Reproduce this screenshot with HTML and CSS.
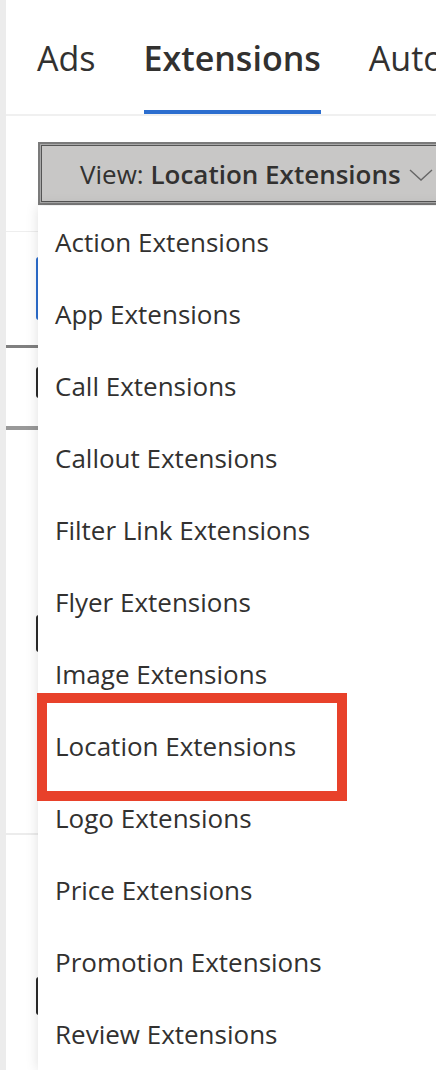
FILE: index.html
```html
<!DOCTYPE html>
<html lang="en">
<head>
<meta charset="utf-8">
<title>Extensions</title>
<link rel="stylesheet" href="styles.css">
</head>
<body>
<div class="page">
  <nav class="tabs">
    <span class="tab">Ads</span>
    <span class="tab active">Extensions</span>
    <span class="tab">Auto</span>
  </nav>
  <div class="toolbar">
    <div class="view-btn">
      <span class="view-label">View:&nbsp;<b>Location Extensions</b></span>
      <svg class="chev" width="24" height="12" viewBox="0 0 24 12"><path d="M1 1 L12 11 L23 1" fill="none" stroke="#666" stroke-width="1.4"/></svg>
    </div>
  </div>
  <div class="bg-row r1"><div class="bar blue b1"></div></div>
  <div class="bg-row r2"><div class="bar b2"></div></div>
  <div class="bg-row r3"><div class="bar b3"></div></div>
  <div class="bg-row r4"><div class="bar b4"></div></div>

  <ul class="menu">
    <li>Action Extensions</li>
    <li>App Extensions</li>
    <li>Call Extensions</li>
    <li>Callout Extensions</li>
    <li>Filter Link Extensions</li>
    <li>Flyer Extensions</li>
    <li>Image Extensions</li>
    <li class="selected">Location Extensions<span class="highlight"></span></li>
    <li>Logo Extensions</li>
    <li>Price Extensions</li>
    <li>Promotion Extensions</li>
    <li>Review Extensions</li>
  </ul>
</div>
</body>
</html>
```
FILE: styles.css
```css
html, body {
  margin: 0;
  padding: 0;
  background: #fff;
}
body {
  font-family: "Open Sans", "Noto Sans", sans-serif;
  color: #323130;
  overflow: hidden;
}
.page {
  position: relative;
  border-left: 6px solid #ececec;
  height: 1070px;
  box-sizing: border-box;
  overflow: hidden;
}
.tabs {
  display: flex;
  gap: 48px;
  padding-left: 31px;
  height: 114px;
  border-bottom: 2px solid #f0f0f0;
  white-space: nowrap;
}
.tab {
  height: 114px;
  box-sizing: border-box;
  padding-top: 6px;
  border-bottom: 4px solid transparent;
  display: flex;
  align-items: center;
  font-size: 34px;
  color: #323130;
}
.tab.active {
  font-weight: 600;
  border-bottom-color: #2c6ecf;
}
.toolbar {
  height: 116px;
  box-sizing: border-box;
  padding-top: 26px;
  padding-left: 32px;
  border-bottom: 1px solid #eeeeee;
}
.view-btn {
  display: flex;
  align-items: center;
  height: 63px;
  width: 440px;
  box-sizing: border-box;
  background: #c8c7c6;
  border: 2px solid #7b7b7b;
  box-shadow: inset 0 0 0 1px #a9a9a9, inset 0 0 0 2px #555;
  padding-left: 40px;
  font-size: 26px;
  white-space: nowrap;
}
.view-label b {
  font-weight: 600;
}
.chev {
  margin-left: 8px;
  margin-top: 2px;
  flex: none;
}
.bg-row {
  box-sizing: border-box;
}
.r1 { height: 116px; border-bottom: 3px solid #808080; padding-top: 25px; }
.r2 { height: 82px; border-bottom: 4px solid #999; padding-top: 19px; }
.r3 { height: 405px; border-bottom: 2px solid #ececec; padding-top: 185px; }
.r4 { height: 240px; padding-top: 142px; }
.bar {
  margin-left: 30px;
  width: 10px;
  background: #2b2b2b;
  border-radius: 3px 0 0 3px;
}
.bar.blue { background: #2c6ecf; }
.b1 { height: 63px; }
.b2 { height: 31px; }
.b3 { height: 37px; }
.b4 { height: 38px; }

.menu {
  position: absolute;
  top: 206px;
  left: 32px;
  width: 420px;
  margin: 0;
  padding: 0;
  list-style: none;
  background: #fff;
  box-shadow: 0 0 12px rgba(0, 0, 0, 0.13);
}
.menu li {
  position: relative;
  height: 72px;
  display: flex;
  align-items: center;
  padding-left: 17px;
  font-size: 26px;
  white-space: nowrap;
}
.highlight {
  position: absolute;
  top: -17px;
  left: -1px;
  width: 310px;
  height: 108px;
  box-sizing: border-box;
  border: 10px solid #e8412a;
}
```
